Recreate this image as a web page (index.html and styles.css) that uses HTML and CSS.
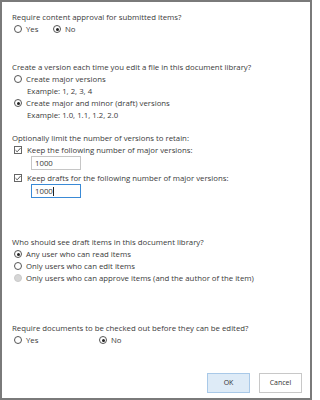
FILE: index.html
```html
<!DOCTYPE html>
<html>
<head>
<meta charset="utf-8">
<link rel="stylesheet" href="styles.css">
</head>
<body>
<div class="dialog">
  <div class="section s1">
    <div class="label">Require content approval for submitted items?</div>
    <div class="choices">
      <div class="opt w37"><span class="radio"></span><span>Yes</span></div>
      <div class="opt"><span class="radio on"></span><span>No</span></div>
    </div>
  </div>

  <div class="section s2">
    <div class="label">Create a version each time you edit a file in this document library?</div>
    <div class="opt"><span class="radio"></span><span>Create major versions</span></div>
    <div class="example">Example: 1, 2, 3, 4</div>
    <div class="opt"><span class="radio on"></span><span>Create major and minor (draft) versions</span></div>
    <div class="example">Example: 1.0, 1.1, 1.2, 2.0</div>
  </div>

  <div class="section s3">
    <div class="label">Optionally limit the number of versions to retain:</div>
    <div class="opt"><span class="check"><svg viewBox="0 0 8 8" width="8" height="8"><path d="M1.5 4.2 L3.2 5.8 L6.6 2" fill="none" stroke="#444" stroke-width="0.9"/></svg></span><span>Keep the following number of major versions:</span></div>
    <div class="field">1000</div>
    <div class="opt gap2"><span class="check"><svg viewBox="0 0 8 8" width="8" height="8"><path d="M1.5 4.2 L3.2 5.8 L6.6 2" fill="none" stroke="#444" stroke-width="0.9"/></svg></span><span>Keep drafts for the following number of major versions:</span></div>
    <div class="field focus">1000<span class="caret"></span></div>
  </div>

  <div class="section s4">
    <div class="label">Who should see draft items in this document library?</div>
    <div class="opt"><span class="radio on"></span><span>Any user who can read items</span></div>
    <div class="opt"><span class="radio"></span><span>Only users who can edit items</span></div>
    <div class="opt"><span class="radio disabled"></span><span>Only users who can approve items (and the author of the item)</span></div>
  </div>

  <div class="section s5">
    <div class="label">Require documents to be checked out before they can be edited?</div>
    <div class="choices">
      <div class="opt w83"><span class="radio"></span><span>Yes</span></div>
      <div class="opt"><span class="radio on"></span><span>No</span></div>
    </div>
  </div>

  <div class="buttons">
    <div class="btn primary">OK</div>
    <div class="btn">Cancel</div>
  </div>
</div>
</body>
</html>
```

FILE: styles.css
```css
html, body {
  margin: 0;
  padding: 0;
  background: #fff;
}
.dialog {
  box-sizing: border-box;
  width: 312px;
  height: 400px;
  border: 2px solid #7a7a7a;
  padding: 9px 8px 0 10px;
  font-family: "Open Sans", "Noto Sans", sans-serif;
  font-size: 7.8px;
  line-height: 12px;
  color: #3a3a3a;
}
.label {
  white-space: nowrap;
}
.s2 { margin-top: 26px; }
.s3 { margin-top: 11px; }
.s4 { margin-top: 38px; }
.s5 { margin-top: 38px; }
.choices {
  display: flex;
}
.opt {
  display: flex;
  align-items: center;
  margin-left: 2px;
  white-space: nowrap;
  height: 12px;
}
.w37 { width: 37px; }
.w83 { width: 83px; }
.radio {
  box-sizing: border-box;
  width: 8px;
  height: 8px;
  border: 0.8px solid #555;
  border-radius: 50%;
  margin-right: 4px;
  flex: none;
  position: relative;
  background: #fff;
}
.radio.on::after {
  content: "";
  position: absolute;
  left: 1.6px;
  top: 1.6px;
  width: 3.2px;
  height: 3.2px;
  border-radius: 50%;
  background: #222;
}
.radio.disabled {
  border-color: #cacaca;
  background: #d6d6d6;
}
.example {
  padding-left: 15px;
}
.check {
  box-sizing: border-box;
  width: 8px;
  height: 8px;
  border: 0.8px solid #666;
  margin-right: 5px;
  flex: none;
  display: flex;
  align-items: center;
  justify-content: center;
}
.check svg {
  display: block;
  flex: none;
}
.field {
  box-sizing: border-box;
  margin-left: 19px;
  width: 50px;
  height: 14px;
  border: 1px solid #c6c6c6;
  padding-left: 3px;
  line-height: 12px;
  display: flex;
  align-items: center;
}
.field.focus {
  border-color: #3a8ad6;
}
.caret {
  display: inline-block;
  width: 1px;
  height: 9px;
  background: #222;
  margin-left: 0.5px;
}
.gap2 { margin-top: 2px; }
.buttons {
  display: flex;
  justify-content: flex-end;
  gap: 9px;
  margin-top: 27px;
}
.btn {
  box-sizing: border-box;
  width: 43px;
  height: 20px;
  border: 1px solid #c8c8c8;
  background: #fff;
  display: flex;
  align-items: center;
  justify-content: center;
  font-size: 7px;
  color: #333;
}
.btn.primary {
  background: #deebf7;
  border-color: #a9c9e8;
}
```
